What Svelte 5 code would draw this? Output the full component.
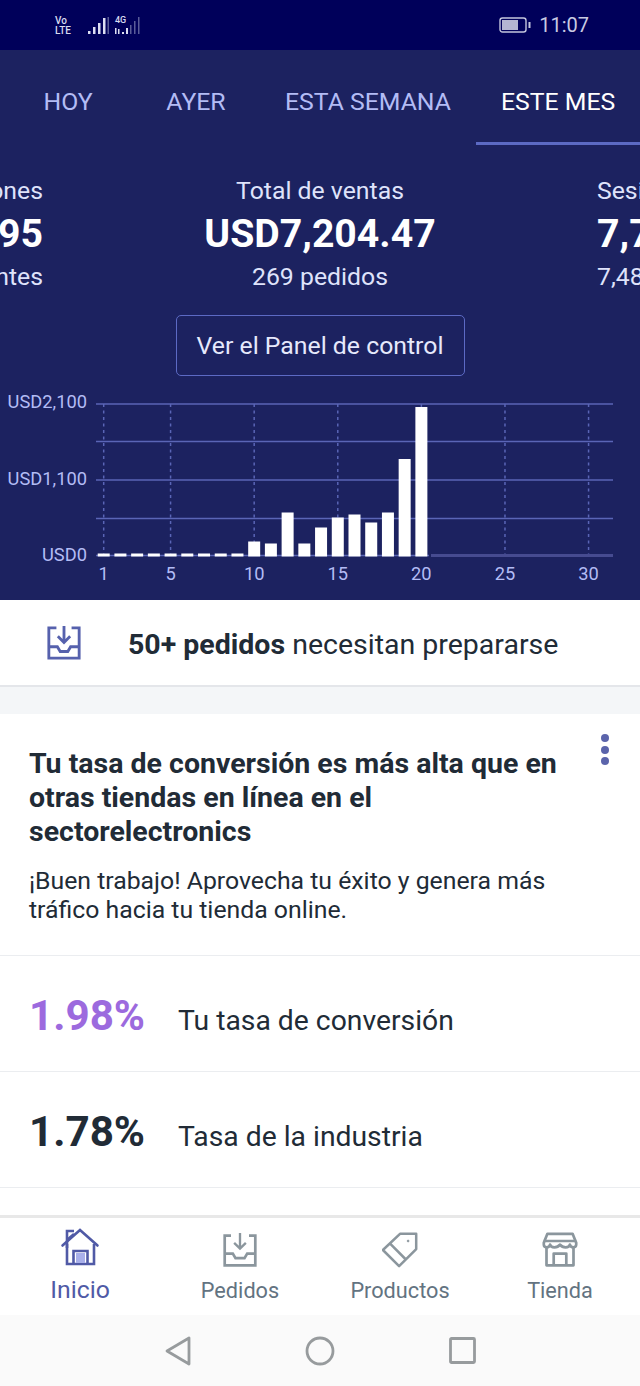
<script>
  const tabs = [
    { label: 'HOY' },
    { label: 'AYER' },
    { label: 'ESTA SEMANA' },
    { label: 'ESTE MES', active: true }
  ];
  const gridY = [404, 441.5, 480, 518.5];
  const ticks = [1, 5, 10, 15, 20, 25, 30];
  const tops = [553.5, 553.5, 553.5, 553.5, 553.5, 553.5, 553.5, 553.5, 553.5, 541.5, 543.5, 512.5, 543.5, 527.5, 517.5, 514.5, 522.5, 512.5, 459, 407];
  const dayX = (d) => 103.7 + (d - 1) * 16.72;
  const yLabels = [
    { t: 'USD2,100', y: 408 },
    { t: 'USD1,100', y: 485 },
    { t: 'USD0', y: 561 }
  ];
</script>

<div class="screen">
  <div class="status">
    <div class="status-left">
      <div class="volte"><span>Vo</span><span>LTE</span></div>
      <svg class="signal" width="58" height="20" viewBox="0 0 58 20" aria-hidden="true">
        <g fill="#dcdef2">
          <rect x="0" y="15" width="2.5" height="3" /><rect x="5" y="11" width="2.5" height="7" /><rect x="10" y="7" width="2.5" height="11" /><rect x="15" y="2" width="2.5" height="16" />
        </g>
        <rect x="19.5" y="1" width="1.5" height="17" fill="#5a5c98" />
        <g fill="#dcdef2">
          <rect x="27" y="12" width="1.5" height="6" /><rect x="30" y="13" width="1.5" height="5" /><rect x="34" y="16" width="2" height="2" /><rect x="38" y="12" width="2" height="6" />
        </g>
        <g fill="#5a5c98">
          <rect x="42" y="9" width="1.5" height="9" /><rect x="46" y="5" width="1.5" height="13" /><rect x="50" y="1" width="1.5" height="17" />
        </g>
      </svg>
      <span class="g4">4G</span>
    </div>
    <div class="status-right">
      <svg width="33" height="18" viewBox="0 0 33 18" aria-hidden="true">
        <rect x="1" y="2" width="26" height="14" rx="2.5" fill="none" stroke="#c4c6de" stroke-width="1.4" />
        <rect x="3" y="4" width="16" height="10" fill="#b4b6d2" />
        <rect x="29.5" y="6" width="2" height="6" fill="#c4c6de" />
      </svg>
      <span class="clock">11:07</span>
    </div>
  </div>

  <section class="hero">
    <nav class="tabs">
      {#each tabs as tab}
        <div class="tab" class:active={tab.active}>{tab.label}</div>
      {/each}
    </nav>

    <div class="metrics">
      <div class="metric side left">
        <div>Conversiones</div>
        <div class="value">1,395</div>
        <div>visitantes</div>
      </div>
      <div class="metric main">
        <div>Total de ventas</div>
        <div class="value">USD7,204.47</div>
        <div>269 pedidos</div>
      </div>
      <div class="metric side right">
        <div>Sesiones</div>
        <div class="value">7,710</div>
        <div>7,485 visitantes</div>
      </div>
    </div>

    <div class="cta-row"><div class="cta">Ver el Panel de control</div></div>

    <svg class="chart" width="640" height="205" viewBox="0 395 640 205" role="img" aria-label="Gráfico de ventas">
      {#each gridY as y}
        <line x1="96" x2="613" y1={y} y2={y} stroke="#5a65b6" stroke-width="1.5" />
      {/each}
      {#each ticks as d}
        <line x1={dayX(d)} x2={dayX(d)} y1="404" y2="556" stroke="#5a65b6" stroke-width="1.5" stroke-dasharray="3 3.5" />
        <text class="tick" x={dayX(d)} y="580" text-anchor="middle">{d}</text>
      {/each}
      {#each yLabels as l}
        <text class="tick" x="87" y={l.y} text-anchor="end">{l.t}</text>
      {/each}
      <line x1="96" x2="429" y1="555.5" y2="555.5" stroke="#5a65b6" stroke-width="1.5" />
      <line x1="431" x2="613" y1="555.5" y2="555.5" stroke="#464b90" stroke-width="3" />
      {#each tops as top, i}
        <rect x={dayX(i + 1) - 6} y={top} width="12" height={556.5 - top} fill="#ffffff" />
      {/each}
    </svg>
  </section>

  <div class="banner">
    <svg class="banner-icon" width="36" height="36" viewBox="0 0 38 38" fill="none" stroke="#5661ad" stroke-width="3" aria-hidden="true">
      <path d="M11 3H3V35H35V3H27" />
      <path d="M3 23H12L15 28H23L26 23H35" />
      <path d="M19 1V18M12.5 12L19 18.5L25.5 12" />
    </svg>
    <p><strong>50+ pedidos</strong> necesitan prepararse</p>
  </div>

  <div class="gap"></div>

  <div class="card">
    <div class="card-head">
      <h2>Tu tasa de conversión es más alta que en otras tiendas en línea en el sectorelectronics</h2>
      <p>¡Buen trabajo! Aprovecha tu éxito y genera más tráfico hacia tu tienda online.</p>
      <div class="dots"><i></i><i></i><i></i></div>
    </div>
    <div class="rate">
      <span class="pct purple">1.98%</span>
      <span class="rate-label">Tu tasa de conversión</span>
    </div>
    <div class="rate">
      <span class="pct">1.78%</span>
      <span class="rate-label">Tasa de la industria</span>
    </div>
    <div class="rate-end"></div>
  </div>

  <nav class="bottom">
    <div class="item current">
      <svg class="home" width="40" height="40" viewBox="0 4 40 40" fill="none" stroke="#505aa6" stroke-width="2.6" aria-hidden="true">
        <path d="M2.5 19.5L20 4L37.5 19.5" stroke-linecap="round" />
        <path d="M7 22V5H14" /><path d="M7 14L14 8" />
        <path d="M7 18V38H34V18" />
        <path d="M13.5 38V25H27.5V38" />
        <rect x="16" y="27" width="9" height="10" fill="#a9b0ea" stroke="none" />
      </svg>
      <span>Inicio</span>
    </div>
    <div class="item">
      <svg width="36" height="36" viewBox="0 0 40 40" fill="none" stroke="#8b969d" stroke-width="3" aria-hidden="true">
        <path d="M10 4H3V37H37V4H30" />
        <path d="M3 24H12L15 29H25L28 24H37" />
        <path d="M20 1V18M13.5 12L20 18.5L26.5 12" stroke-width="2.6" />
      </svg>
      <span>Pedidos</span>
    </div>
    <div class="item">
      <svg width="36" height="36" viewBox="0 0 40 40" fill="none" stroke="#8b969d" stroke-width="2.8" stroke-linejoin="round" aria-hidden="true">
        <path d="M20 2H38V19L19 38L1 20Z" />
        <path d="M9 13L26 30" />
        <circle cx="29" cy="10" r="1" fill="#8b969d" stroke-width="1" />
      </svg>
      <span>Productos</span>
    </div>
    <div class="item">
      <svg width="36" height="36" viewBox="0 0 40 40" fill="none" stroke="#8b969d" stroke-width="3" stroke-linejoin="round" aria-hidden="true">
        <path d="M6 2H34L38 12V14C38 18 32 18 31 14C30 18 23 18 20 14C17 18 10 18 9 14C8 18 2 18 2 14V12Z" />
        <path d="M2 10H38" />
        <path d="M5 17V37H35V17" />
        <path d="M13 37V24H27V37" />
      </svg>
      <span>Tienda</span>
    </div>
  </nav>

  <div class="system">
    <svg width="26" height="30" viewBox="0 0 26 30" fill="none" stroke="#979b9d" stroke-width="2.8" stroke-linejoin="round" aria-hidden="true"><path d="M24 2V28L2 15Z" /></svg>
    <svg width="30" height="30" viewBox="0 0 30 30" fill="none" stroke="#979b9d" stroke-width="2.8" aria-hidden="true"><circle cx="15" cy="15" r="13" /></svg>
    <svg width="27" height="27" viewBox="0 0 27 27" fill="none" stroke="#979b9d" stroke-width="2.8" stroke-linejoin="round" aria-hidden="true"><rect x="1.5" y="1.5" width="24" height="24" rx="1" /></svg>
  </div>
</div>

<style>
  :global(body) { margin: 0; background: #fff; }
  .screen {
    width: 640px;
    height: 1386px;
    overflow: hidden;
    display: flex;
    flex-direction: column;
    font-family: Roboto, "Liberation Sans", sans-serif;
    color: #212b36;
  }
  .status {
    height: 50px;
    flex: none;
    background: #00005a;
    display: flex;
    justify-content: space-between;
    align-items: center;
    padding: 2px 51px 0 55px;
    box-sizing: border-box;
    color: #d8daf0;
  }
  .status-left { display: flex; align-items: center; gap: 15px; position: relative; }
  .volte { display: flex; flex-direction: column; width: 18px; font-size: 10px; line-height: 10px; font-weight: 500; }
  .g4 { position: absolute; left: 60px; top: -1px; font-size: 9px; line-height: 10px; font-weight: 500; }
  .status-right { display: flex; align-items: center; gap: 7px; margin-top: -2px; }
  .clock { font-size: 20px; color: #c8cae2; }
  .hero {
    height: 550px;
    flex: none;
    background: #1c2260;
    color: #fff;
    display: flex;
    flex-direction: column;
  }
  .tabs { display: flex; height: 95px; flex: none; padding-left: 4px; }
  .tab {
    flex: none;
    min-width: 128px;
    padding: 12px 25px 2px;
    box-sizing: border-box;
    display: flex;
    align-items: center;
    justify-content: center;
    font-size: 24.8px;
    color: #b3bcf5;
    border-bottom: 3px solid transparent;
  }
  .tab.active { color: #fff; border-bottom-color: #5c6ac4; }
  .metrics { display: flex; margin-top: 31px; height: 116px; }
  .metric { font-size: 24.8px; line-height: 30px; white-space: nowrap; color: #dfe3fb; display: flex; flex-direction: column; align-items: center; }
  .value { font-size: 39.2px; line-height: 56px; height: 56px; font-weight: 700; color: #fff; }
  .main { flex: 1; }
  .side { width: 43px; flex: none; overflow: hidden; }
  .left { align-items: flex-end; }
  .right { align-items: flex-start; }
  .cta-row { display: flex; justify-content: center; margin-top: 23px; }
  .cta {
    width: 289px;
    height: 61px;
    box-sizing: border-box;
    border: 1.5px solid #5c6ac4;
    border-radius: 5px;
    display: flex;
    align-items: center;
    justify-content: center;
    font-size: 24.8px;
    color: #e6e9fc;
  }
  .chart { display: block; margin-top: 19px; }
  .tick { font-size: 18.3px; fill: #b3bcf5; font-family: Roboto, "Liberation Sans", sans-serif; }
  .banner {
    height: 87px;
    flex: none;
    box-sizing: border-box;
    background: #fff;
    border-bottom: 2px solid #e4e6ea;
    display: flex;
    align-items: center;
    padding-left: 46px;
    gap: 46px;
  }
  .banner p { margin: 3px 0 0; font-size: 28.5px; white-space: nowrap; }
  .banner strong { font-weight: 700; }
  .gap { height: 27px; flex: none; background: #f4f6f8; }
  .card { flex: 1; background: #fff; min-height: 0; }
  .card-head { position: relative; padding: 33px 29px 0; height: 241px; box-sizing: border-box; }
  h2 { margin: 0; font-size: 28.5px; line-height: 34px; font-weight: 700; width: 545px; }
  .card-head p { margin: 18px 0 0; font-size: 24.8px; line-height: 28.5px; width: 545px; }
  .dots { position: absolute; right: 31px; top: 20px; display: flex; flex-direction: column; gap: 3.5px; }
  .dots i { width: 8px; height: 8px; border-radius: 50%; background: #5b64ab; display: block; }
  .rate {
    height: 116px;
    box-sizing: border-box;
    border-top: 1px solid #ebedf0;
    display: flex;
    align-items: center;
    padding: 14px 0 0 29px;
  }
  .rate-end { border-top: 1px solid #ebedf0; }
  .pct { font-size: 42.2px; font-weight: 700; width: 149px; margin-bottom: 10px; }
  .purple { color: #9c6ade; }
  .rate-label { font-size: 28.3px; }
  .bottom {
    height: 100px;
    flex: none;
    box-sizing: border-box;
    background: #fff;
    border-top: 3px solid #e8e8e8;
    display: flex;
  }
  .item {
    flex: 1;
    display: flex;
    flex-direction: column;
    align-items: center;
    padding-top: 14px;
    font-size: 21.7px;
    color: #637381;
    line-height: 26px;
    gap: 10px;
  }
  .item.current { color: #505aa6; font-size: 24.8px; gap: 9px; }
  .home { margin: -2px 0; overflow: visible; }
  .system {
    height: 71px;
    flex: none;
    background: #fafafa;
    display: flex;
    align-items: center;
    justify-content: center;
    gap: 114px;
  }
</style>
